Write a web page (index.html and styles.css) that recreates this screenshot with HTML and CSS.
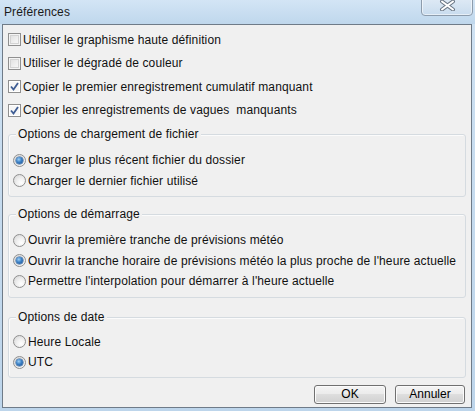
FILE: index.html
```html
<!DOCTYPE html>
<html lang="fr">
<head>
<meta charset="utf-8">
<title>Préférences</title>
<link rel="stylesheet" href="styles.css">
</head>
<body>
<div class="window">
  <div class="titlebar">
    <span class="title">Préférences</span>
    <button class="close" aria-label="Fermer">
      <svg width="17" height="11" viewBox="0 0 17 11">
        <path d="M3 1.5 L14 9.5 M14 1.5 L3 9.5" stroke="#6b7785" stroke-width="4" stroke-linecap="round" fill="none"/>
        <path d="M3 1.5 L14 9.5 M14 1.5 L3 9.5" stroke="#ffffff" stroke-width="2" stroke-linecap="round" fill="none"/>
      </svg>
    </button>
  </div>
  <div class="client">
    <div class="checks">
      <label class="row"><span class="cb"></span>Utiliser le graphisme haute définition</label>
      <label class="row"><span class="cb"></span>Utiliser le dégradé de couleur</label>
      <label class="row"><span class="cb on"><svg width="11" height="11" viewBox="0 0 11 11"><path d="M2 5.5 L4.5 8.5 L9 2" stroke="#3f5d94" stroke-width="1.8" fill="none"/></svg></span>Copier le premier enregistrement cumulatif manquant</label>
      <label class="row"><span class="cb on"><svg width="11" height="11" viewBox="0 0 11 11"><path d="M2 5.5 L4.5 8.5 L9 2" stroke="#3f5d94" stroke-width="1.8" fill="none"/></svg></span>Copier les enregistrements de vagues&nbsp; manquants</label>
    </div>

    <div class="group g1">
      <span class="legend">Options de chargement de fichier</span>
      <label class="row r"><span class="rb on"></span>Charger le plus récent fichier du dossier</label>
      <label class="row r"><span class="rb"></span>Charger le dernier fichier utilisé</label>
    </div>

    <div class="group g2">
      <span class="legend">Options de démarrage</span>
      <label class="row r"><span class="rb"></span>Ouvrir la première tranche de prévisions météo</label>
      <label class="row r"><span class="rb on"></span>Ouvrir la tranche horaire de prévisions météo la plus proche de l'heure actuelle</label>
      <label class="row r"><span class="rb"></span>Permettre l'interpolation pour démarrer à l'heure actuelle</label>
    </div>

    <div class="group g3">
      <span class="legend">Options de date</span>
      <label class="row r"><span class="rb"></span>Heure Locale</label>
      <label class="row r"><span class="rb on"></span>UTC</label>
    </div>

    <div class="buttons">
      <button class="btn ok">OK</button>
      <button class="btn cancel">Annuler</button>
    </div>
  </div>
</div>
</body>
</html>
```

FILE: styles.css
```css
* { box-sizing: border-box; }
html, body { margin: 0; padding: 0; }
body {
  font-family: "Liberation Sans", Arial, sans-serif;
  font-size: 12px;
  letter-spacing: 0.12px;
  color: #111;
  background: #c4daee;
}
.window {
  width: 475px;
  height: 411px;
  background: linear-gradient(180deg, #c2d8ec 0%, #cfe2f3 6%, #c7dcef 40%, #bdd5eb 100%);
  overflow: hidden;
}
.titlebar {
  height: 24px;
  position: relative;
  display: flex;
  align-items: center;
  padding-left: 4px;
  background: linear-gradient(180deg, #d3e5f5 0%, #c9def1 50%, #bfd7ec 100%);
}
.title {
  font-size: 12px;
  color: #1a1a1a;
  line-height: 14px;
}
.close {
  position: absolute;
  top: -3px;
  left: 421px;
  width: 52px;
  height: 19px;
  border: 1px solid #8d9cac;
  border-radius: 0 0 4px 4px;
  background: linear-gradient(180deg, #dfeaf5 0%, #d2e2f1 60%, #c8dbee 100%);
  box-shadow: inset 0 0 0 1px rgba(255,255,255,0.55);
  padding: 0;
  display: flex;
  justify-content: center;
  align-items: flex-start;
  padding-top: 2px;
}
.client {
  margin: 0 3px 0 2px;
  height: 384px;
  border: 1px solid #6f7b88;
  background: #f0f0f0;
  padding: 0 5px;
}
.checks { padding-top: 3px; }
.row {
  display: flex;
  align-items: center;
  height: 23.5px;
  white-space: nowrap;
}
.cb {
  width: 13px;
  height: 13px;
  margin-right: 2px;
  border: 1px solid #8f8f8f;
  background: linear-gradient(135deg, #dcdcdc 0%, #f0f0f0 60%, #fbfbfb 100%);
  box-shadow: inset 0 0 0 1px #f4f4f4, inset 0 0 0 2px #d3d3d3;
  display: flex;
  align-items: center;
  justify-content: center;
  flex: none;
}
.cb.on { background: #f6f6f6; box-shadow: inset 0 0 0 1px #fff; }
.cb svg { display: block; }
.group {
  position: relative;
  border: 1px solid #d5dbe0;
  border-radius: 3px;
  box-shadow: inset 1px 1px 0 #fbfbfb;
  padding: 15px 0 5px 0;
}
.g1 { margin-top: 12px; }
.g2 { margin-top: 17px; padding-top: 15px; padding-bottom: 5.5px; }
.g3 { margin-top: 18.5px; padding-top: 14px; padding-bottom: 4px; }
.legend {
  position: absolute;
  top: -8px;
  left: 7px;
  padding: 0 2px;
  line-height: 15px;
  background: #f0f0f0;
}
.row.r { height: 20.5px; padding-left: 4px; }
.rb {
  width: 13px;
  height: 13px;
  border-radius: 50%;
  border: 1px solid #8f8f8f;
  background: radial-gradient(circle at 65% 70%, #ffffff 0%, #f0f0f0 40%, #d2d2d2 100%);
  margin-right: 2px;
  flex: none;
  display: flex;
  align-items: center;
  justify-content: center;
}
.rb.on::after {
  content: "";
  width: 7px;
  height: 7px;
  border-radius: 50%;
  background: radial-gradient(circle at 40% 35%, #9fd0f5 0%, #3a7fc4 45%, #1e4f8c 100%);
  box-shadow: 0 0 0 0.5px #2a5a90;
}
.buttons {
  margin-top: 7px;
  display: flex;
  justify-content: flex-end;
  gap: 9px;
  padding-right: 1px;
}
.btn {
  font-family: "Liberation Sans", Arial, sans-serif;
  font-size: 12px;
  color: #000;
  height: 19px;
  border: 1px solid #707070;
  border-radius: 3px;
  background: linear-gradient(180deg, #f4f4f4 0%, #ececec 45%, #dedede 50%, #d0d0d0 100%);
  box-shadow: inset 0 0 0 1px #fbfbfb;
  padding: 0;
  line-height: 16px;
}
.ok { width: 72px; }
.cancel { width: 70px; }
```
